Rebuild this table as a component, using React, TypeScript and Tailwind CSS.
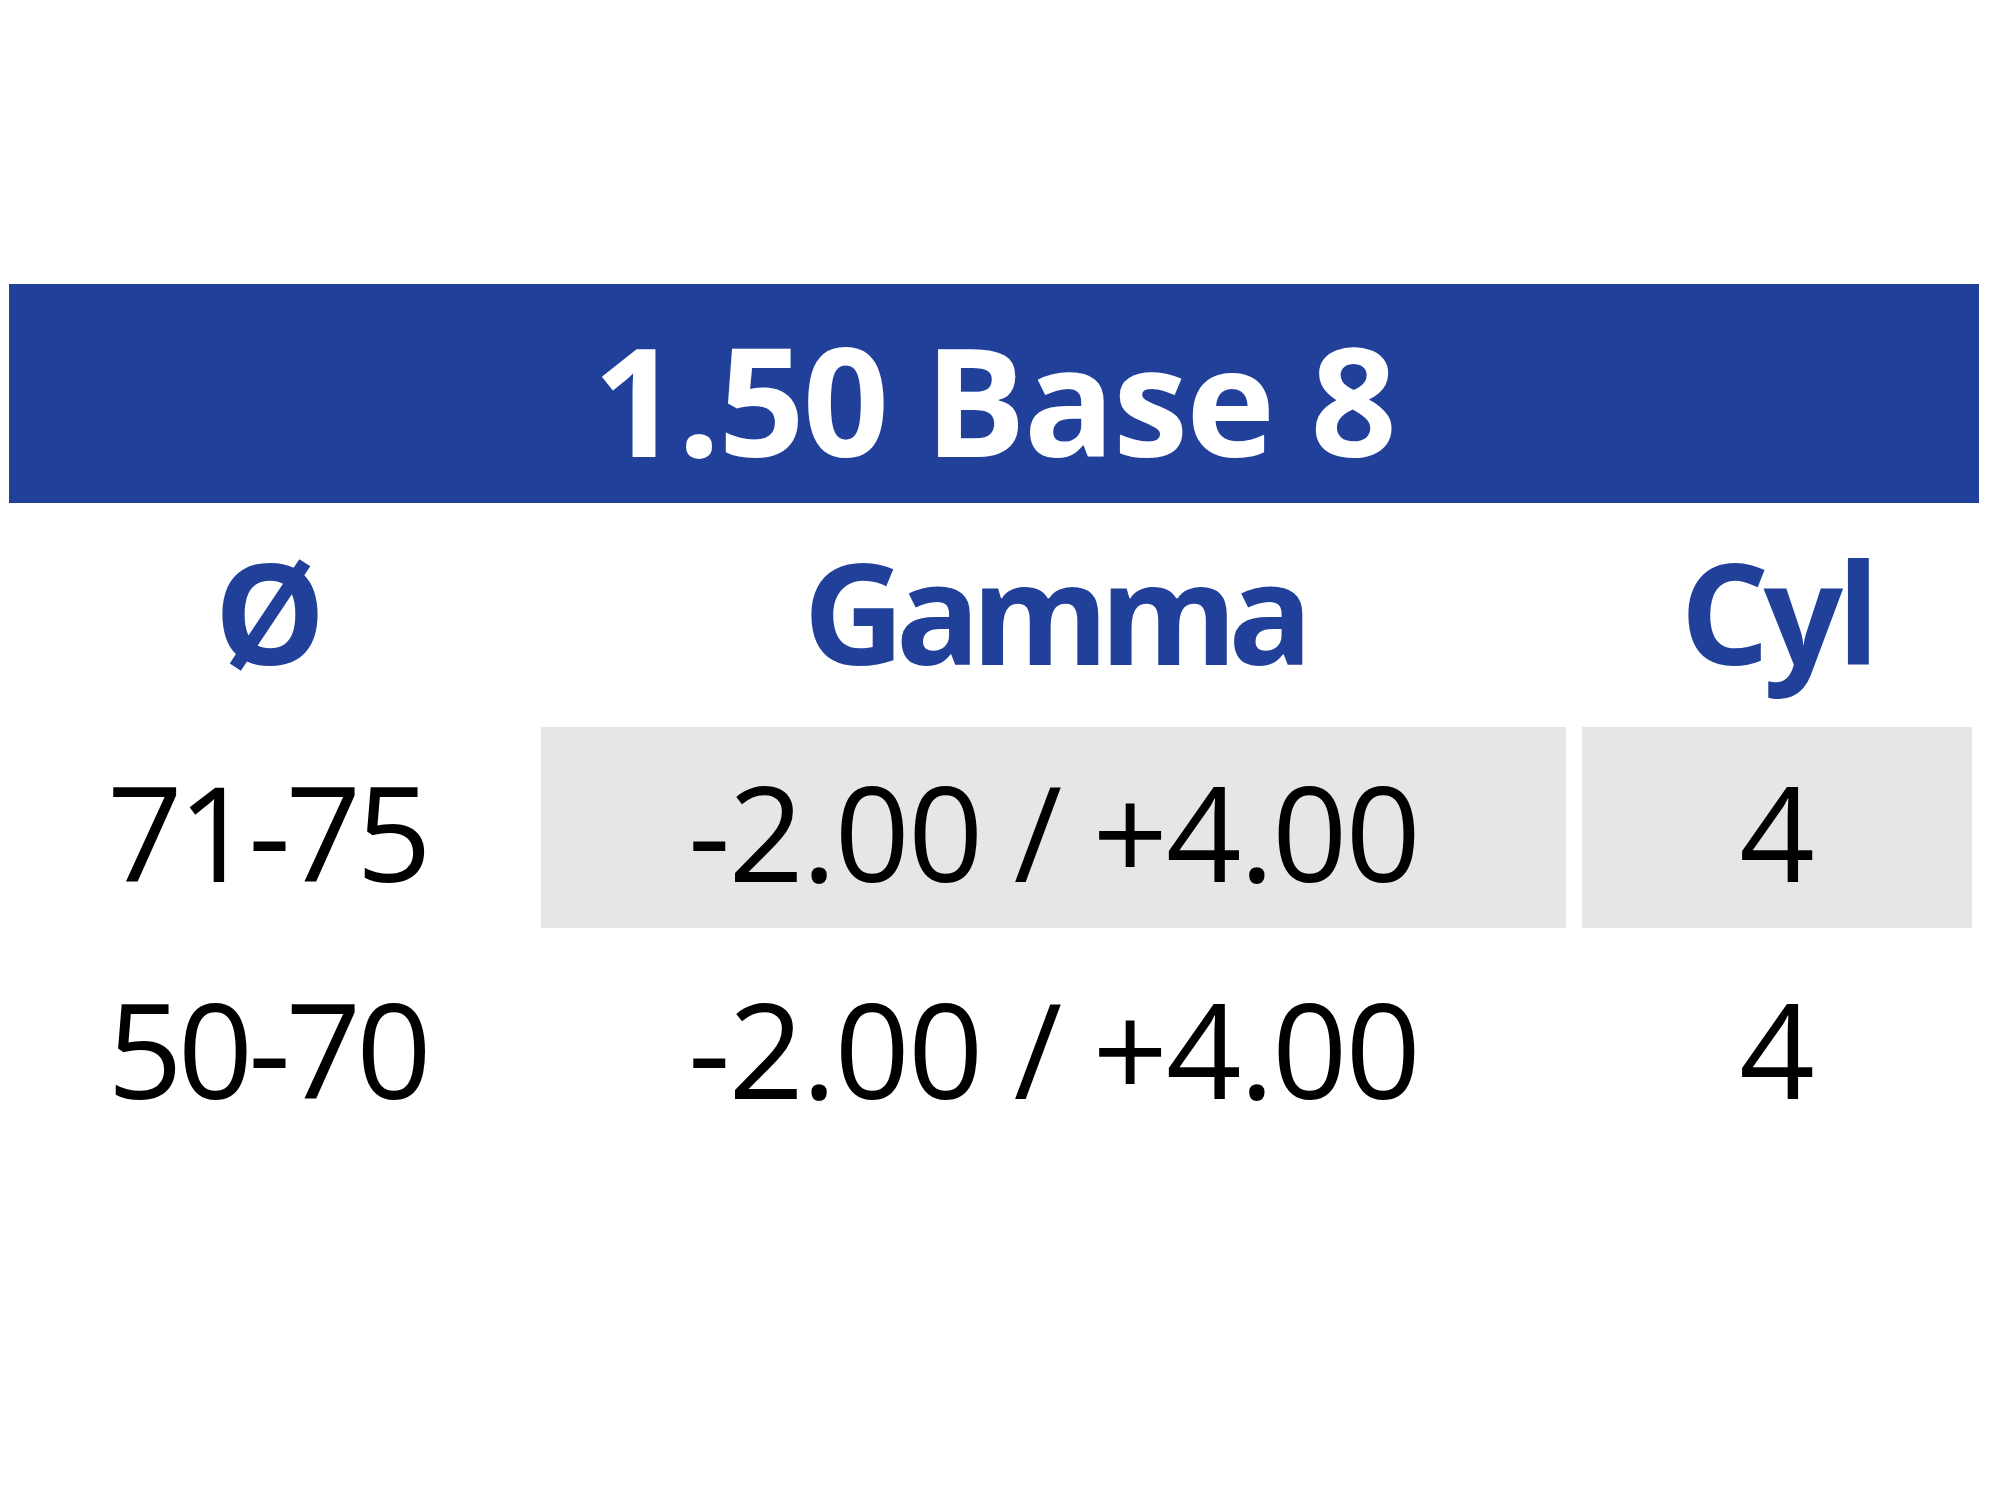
const rows = [
  { dia: "71-75", gamma: "-2.00 / +4.00", cyl: "4", shaded: true },
  { dia: "50-70", gamma: "-2.00 / +4.00", cyl: "4", shaded: false },
];

export default function App() {
  return (
    <div className="min-h-[1500px] w-[2000px] bg-white pl-[9px] pt-[284px] font-['Open_Sans',sans-serif]">
      {/* title bar */}
      <div className="flex h-[219px] w-[1970px] items-center justify-center bg-[#21409a] pt-[10px]">
        <h1 className="text-[151px] font-bold leading-none tracking-[-2px] text-white">1.50 Base 8</h1>
      </div>

      <div className="mt-[8px] grid w-[1963px] grid-cols-[516px_1025px_390px] gap-[16px]">
        {/* column heads */}
        <div className="flex h-[200px] items-center justify-center text-[140px] font-bold leading-none tracking-[-6px] text-[#21409a]">
          Ø
        </div>
        <div className="flex h-[200px] items-center justify-center text-[140px] font-bold leading-none tracking-[-9px] text-[#21409a]">
          Gamma
        </div>
        <div className="flex h-[200px] items-center justify-center text-[140px] font-bold leading-none tracking-[-6px] text-[#21409a]">
          Cyl
        </div>

        {rows.map((r) => (
          <div key={r.dia} className="contents">
            <div className="flex h-[201px] items-center justify-center pt-[6px] text-[132px] leading-none tracking-[-5px] text-black">
              {r.dia}
            </div>
            <div
              className={`flex h-[201px] items-center justify-center pt-[6px] text-[132px] leading-none tracking-[-2px] text-black ${
                r.shaded ? "bg-[#e6e6e8]" : ""
              }`}
            >
              {r.gamma}
            </div>
            <div
              className={`flex h-[201px] items-center justify-center pt-[6px] text-[132px] leading-none text-black ${
                r.shaded ? "bg-[#e6e6e8]" : ""
              }`}
            >
              {r.cyl}
            </div>
          </div>
        ))}
      </div>
    </div>
  );
}
